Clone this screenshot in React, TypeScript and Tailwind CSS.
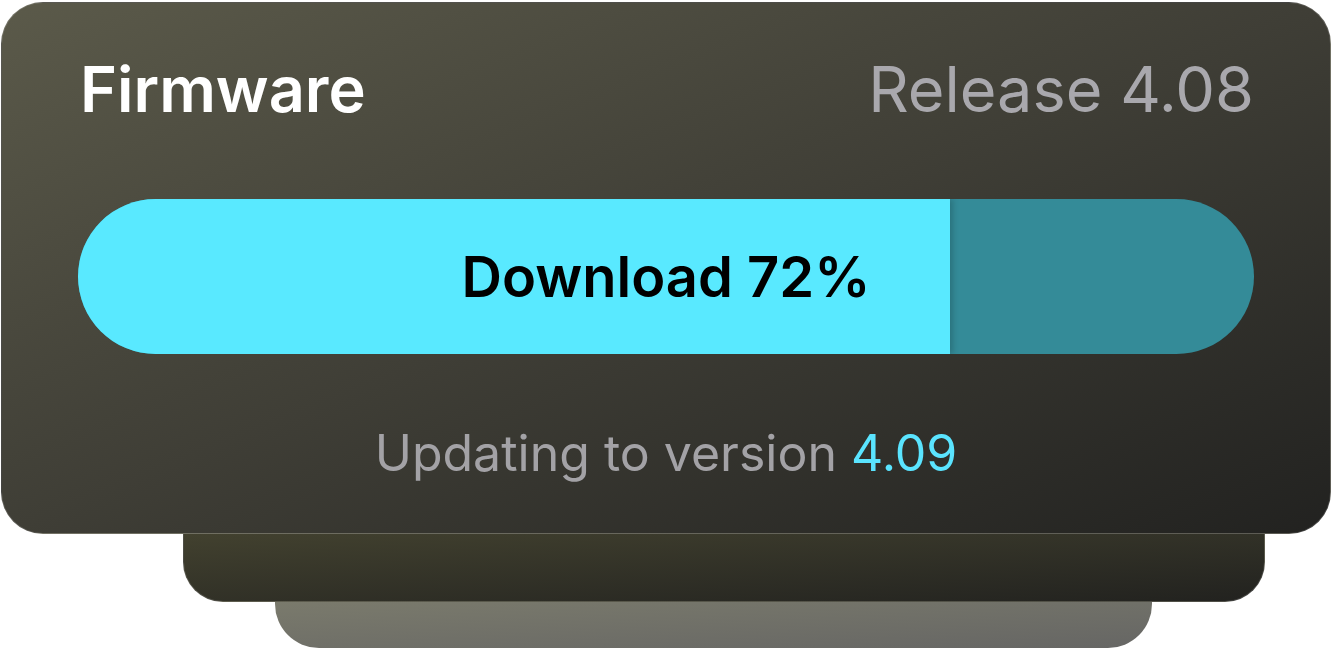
export default function App() {
  return (
    <div className="flex h-[648px] w-[1332px] flex-col overflow-hidden bg-white font-['Inter',sans-serif]">
      {/* Front card */}
      <div className="mt-[2px] ml-[1px] flex h-[533px] w-[1330px] flex-col rounded-[42px] border border-white/15 bg-gradient-to-br from-[#5b5a4a] via-[#3f3e36] to-[#222220] px-[76px]">
        <div className="mt-[46px] flex items-center justify-between pl-[2px]">
          <span className="text-[63px] font-semibold leading-[80px] text-white">Firmware</span>
          <span className="text-[63px] leading-[80px] text-[#a9a8ad]">Release 4.08</span>
        </div>

        <div className="mt-[70px] grid h-[155px] overflow-hidden rounded-full bg-[#348b98]">
          <div className="col-start-1 row-start-1 h-full w-[872px] bg-[#59e9ff] shadow-[3px_0_6px_rgba(0,0,0,0.18)]" />
          <div className="col-start-1 row-start-1 flex items-center justify-center text-[56px] font-semibold text-black">
            Download 72%
          </div>
        </div>

        <div className="mt-[62px] text-center text-[50px] text-[#a3a2a6]">
          Updating to version <span className="text-[#5ae4ff]">4.09</span>
        </div>
      </div>

      {/* Stacked cards behind */}
      <div className="ml-[183px] h-[68px] w-[1082px] rounded-b-[40px] border border-t-0 border-white/15 bg-gradient-to-br from-[#42412f] to-[#22221f]" />
      <div className="ml-[275px] h-[46px] w-[877px] rounded-b-[44px] bg-gradient-to-br from-[#7a7a6c] to-[#666664]" />
    </div>
  );
}
